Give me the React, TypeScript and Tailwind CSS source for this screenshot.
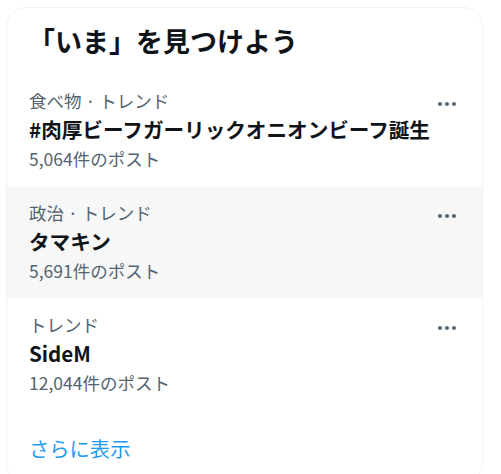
import React from 'react';

type Trend = { category: string; name: string; count: string; hover?: boolean };

const trends: Trend[] = [
  { category: '食べ物 · トレンド', name: '#肉厚ビーフガーリックオニオンビーフ誕生', count: '5,064件のポスト' },
  { category: '政治 · トレンド', name: 'タマキン', count: '5,691件のポスト', hover: true },
  { category: 'トレンド', name: 'SideM', count: '12,044件のポスト' },
];

const MoreIcon: React.FC = () => (
  <svg viewBox="0 0 24 24" className="w-[24px] h-[24px] fill-[#536471]">
    <path d="M3 12c0-1.1.9-2 2-2s2 .9 2 2-.9 2-2 2-2-.9-2-2zm9 2c1.1 0 2-.9 2-2s-.9-2-2-2-2 .9-2 2 .9 2 2 2zm7 0c1.1 0 2-.9 2-2s-.9-2-2-2-2 .9-2 2 .9 2 2 2z" />
  </svg>
);

const TrendRow: React.FC<{ trend: Trend }> = ({ trend }) => (
  <div className={`flex pl-[22px] pr-[23px] pt-[16px] pb-[16px] ${trend.hover ? 'bg-[#f7f7f7]' : ''}`}>
    <div className="flex-1 flex flex-col">
      <div className="text-[17.5px] leading-[22px] text-[#536471]">{trend.category}</div>
      <div className="mt-[4px] text-[20.6px] leading-[26px] font-bold text-[#0f1419] whitespace-nowrap">{trend.name}</div>
      <div className="mt-[6px] text-[17.5px] leading-[22px] text-[#536471]">{trend.count}</div>
    </div>
    <div className="mt-[2px]">
      <MoreIcon />
    </div>
  </div>
);

export default function App() {
  return (
    <div
      className="w-[501px] h-[474px] overflow-hidden bg-white"
      style={{ fontFamily: '"Noto Sans CJK JP", "Noto Sans", sans-serif' }}
    >
      <div className="ml-[6px] mt-[7px] w-[477px] border border-[#eff3f4] rounded-[20px] overflow-hidden">
        <div className="h-[66px] flex items-center pl-[22px]">
          <h2 className="text-[27px] leading-[32px] font-bold text-[#0f1419] -ml-[1px]">「いま」を見つけよう</h2>
        </div>
        {trends.map((t) => (
          <TrendRow key={t.name} trend={t} />
        ))}
        <div className="h-[72px] pl-[22px] pt-[25px]">
          <span className="text-[20.3px] leading-[26px] text-[#1d9bf0]">さらに表示</span>
        </div>
      </div>
    </div>
  );
}
